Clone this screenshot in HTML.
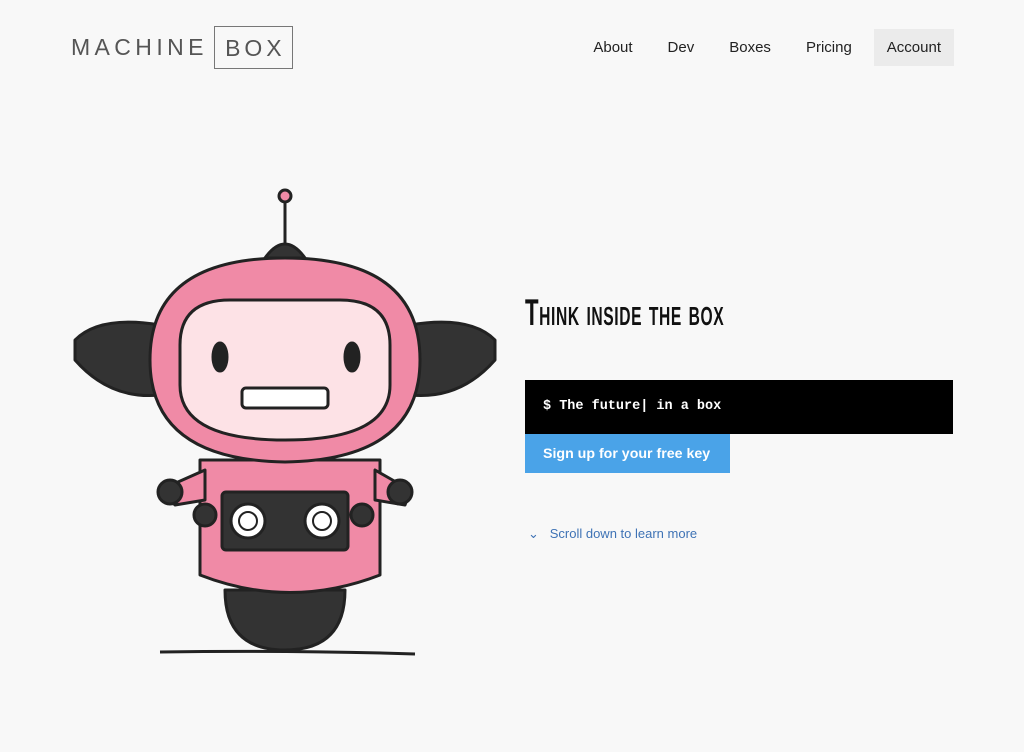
<!DOCTYPE html>
<html><head><meta charset="utf-8"><style>
body{margin:0;width:1024px;height:752px;background:#f8f8f8;font-family:"Liberation Sans",sans-serif;position:relative;overflow:hidden}
.logo{position:absolute;left:71px;top:26px;height:43px;display:flex;align-items:center;font-size:23px;letter-spacing:4.4px;color:#555;font-weight:300}
.logo .b{border:1px solid #777;width:79px;box-sizing:border-box;text-align:center;height:43px;line-height:43px;margin-left:6px;letter-spacing:4px;padding-left:4px}
.nav{position:absolute;top:29px;right:70px;display:flex;font-size:15px;color:#222}
.nav div{padding:0 13px;height:37px;line-height:37px;margin-left:9px}
.nav .acc{background:#ebebeb}
h1{position:absolute;left:525px;top:292px;margin:0;font-family:"Liberation Sans Narrow","Liberation Sans",sans-serif;font-weight:bold;font-size:37px;color:#111;transform:scaleX(.6);transform-origin:left;font-variant:small-caps;white-space:nowrap;letter-spacing:1px}
.term{position:absolute;left:525px;top:380px;width:428px;height:54px;background:#000;color:#fff;font-family:"Liberation Mono",monospace;font-weight:bold;font-size:13.5px;line-height:54px;box-sizing:border-box;padding-left:18px}
.btn{position:absolute;left:525px;top:434px;width:205px;height:39px;background:#4aa3e8;color:#fff;font-weight:bold;font-size:14.2px;line-height:40px;box-sizing:border-box;padding-left:18px}
.scroll{position:absolute;left:528px;top:526px;font-size:13px;color:#3f73b5}
</style></head><body>
<div class="logo"><span>MACHINE</span><span class="b">BOX</span></div>
<div class="nav"><div>About</div><div>Dev</div><div>Boxes</div><div>Pricing</div><div class="acc">Account</div></div>
<svg style="position:absolute;left:0;top:0" width="520" height="700" stroke="#222" stroke-width="3" stroke-linejoin="round">
<line x1="285" y1="200" x2="285" y2="245"/><circle cx="285" cy="196" r="6" fill="#f08aa6"/>
<path d="M265 258 Q285 230 305 258Z" fill="#333"/>
<path d="M75 340 Q100 315 160 325 L160 395 Q110 400 75 360Z" fill="#333"/>
<path d="M495 340 Q470 315 410 325 L410 395 Q460 400 495 360Z" fill="#333"/>
<path d="M225 590 Q225 650 285 650 Q345 650 345 590Z" fill="#333"/>
<path d="M200 460 L380 460 L380 575 Q290 610 200 575Z" fill="#f08aa6"/>
<path d="M160 490 L205 470 L205 500 L175 505Z" fill="#f08aa6"/><path d="M410 490 L375 470 L375 500 L405 505Z" fill="#f08aa6"/>
<circle cx="170" cy="492" r="12" fill="#333"/><circle cx="400" cy="492" r="12" fill="#333"/>
<circle cx="205" cy="515" r="11" fill="#333"/><circle cx="362" cy="515" r="11" fill="#333"/>
<rect x="222" y="492" width="126" height="58" rx="4" fill="#333"/>
<circle cx="248" cy="521" r="17" fill="#fff"/><circle cx="248" cy="521" r="9" fill="none" stroke-width="2"/><circle cx="322" cy="521" r="17" fill="#fff"/><circle cx="322" cy="521" r="9" fill="none" stroke-width="2"/>
<path d="M150 360 Q150 258 285 258 Q420 258 420 360 Q420 460 285 462 Q150 460 150 360Z" fill="#f08aa6"/>
<path d="M180 345 Q180 300 230 300 L340 300 Q390 300 390 345 L390 385 Q390 440 285 440 Q180 440 180 385Z" fill="#fde2e6"/>
<ellipse cx="220" cy="357" rx="7" ry="14" fill="#222"/><ellipse cx="352" cy="357" rx="7" ry="14" fill="#222"/>
<rect x="242" y="388" width="86" height="20" rx="4" fill="#fff"/>
<path d="M160 652 Q290 650 415 654" fill="none"/>
</svg>
<h1>Think inside the box</h1>
<div class="term">$ The future| in a box</div>
<div class="btn">Sign up for your free key</div>
<div class="scroll">⌄&nbsp;&nbsp; Scroll down to learn more</div>
</body></html>
